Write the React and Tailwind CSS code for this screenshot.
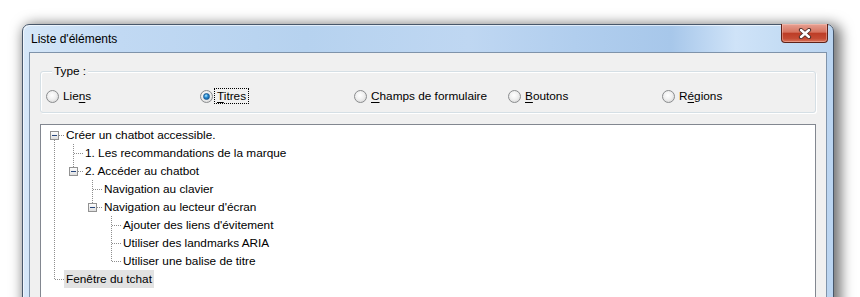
import React from 'react';

const rows = [
  { text: 'Créer un chatbot accessible.', cells: ['first'], box: true },
  { text: '1. Les recommandations de la marque', cells: ['pipe', 'tee'] },
  { text: '2. Accéder au chatbot', cells: ['pipe', 'ell'], box: true },
  { text: 'Navigation au clavier', cells: ['pipe', 'blank', 'tee'] },
  { text: "Navigation au lecteur d'écran", cells: ['pipe', 'blank', 'ell'], box: true },
  { text: "Ajouter des liens d'évitement", cells: ['pipe', 'blank', 'blank', 'tee'] },
  { text: 'Utiliser des landmarks ARIA', cells: ['pipe', 'blank', 'blank', 'tee'] },
  { text: 'Utiliser une balise de titre', cells: ['pipe', 'blank', 'blank', 'ell'] },
  { text: 'Fenêtre du tchat', cells: ['ell'], selected: true },
];

const radios = [
  { pre: 'Lie', key: 'n', post: 's' },
  { pre: '', key: 'T', post: 'itres', checked: true },
  { pre: '', key: 'C', post: 'hamps de formulaire' },
  { pre: '', key: 'B', post: 'outons' },
  { pre: 'R', key: 'é', post: 'gions' },
];

const LINE = '#8e8e8e';

function TreeCell({ type, box }) {
  const v =
    type === 'pipe' || type === 'tee'
      ? [0, 18]
      : type === 'ell'
      ? [0, 9.5]
      : type === 'first'
      ? [9.5, 18]
      : null;
  const h = type === 'tee' || type === 'ell' || type === 'first';
  return (
    <svg width="19" height="18" viewBox="0 0 19 18" className="shrink-0" shapeRendering="crispEdges">
      <defs>
        <linearGradient id="bx" x1="0" y1="0" x2="0" y2="1">
          <stop offset="0" stopColor="#ffffff" />
          <stop offset="1" stopColor="#dcdcdc" />
        </linearGradient>
      </defs>
      {v && (
        <line x1="8.5" y1={v[0]} x2="8.5" y2={v[1]} stroke={LINE} strokeDasharray="1 1" />
      )}
      {h && <line x1="9" y1="9.5" x2="19" y2="9.5" stroke={LINE} strokeDasharray="1 1" />}
      {box && (
        <g>
          <rect x="4.5" y="5.5" width="8" height="8" fill="url(#bx)" stroke="#929292" />
          <line x1="6" y1="9.5" x2="11" y2="9.5" stroke="#27467c" />
        </g>
      )}
    </svg>
  );
}

function Radio({ item }) {
  return (
    <div className="flex items-center h-[18px]">
      <span className="w-[13px] h-[13px] shrink-0 rounded-full border border-[#8a8c8e] bg-[radial-gradient(circle_at_45%_40%,#ffffff_0%,#f0f0f0_45%,#cfcfcf_100%)] flex items-center justify-center">
        {item.checked && (
          <span className="w-[7px] h-[7px] rounded-full bg-[radial-gradient(circle_at_40%_35%,#b8ecff_0%,#2a8fd6_40%,#0c4a8a_100%)] border border-[#1c5a92]" />
        )}
      </span>
      <span
        className={`ml-[1px] px-[2px] leading-[14px] border border-dotted ${
          item.checked ? 'border-black' : 'border-transparent'
        }`}
      >
        {item.pre}
        <u className="underline-offset-[2px]">{item.key}</u>
        {item.post}
      </span>
    </div>
  );
}

export default function App() {
  return (
    <div className="w-[860px] h-[297px] bg-white overflow-hidden pl-[22px] pt-[24px] font-['Liberation_Sans',Arial,sans-serif] text-[11.8px] text-black">
      <div className="w-[812px] h-[320px] flex flex-col rounded-t-[7px] border border-[#48576a] shadow-[4px_3px_13px_3px_rgba(0,0,0,0.55),inset_1px_1px_0_rgba(255,255,255,0.6)] bg-[linear-gradient(90deg,#d6e7f8_0%,#c1d9f3_12%,#b6d2ef_35%,#bfd7f2_55%,#b1ceee_68%,#a7c7ea_80%,#cfe3f8_88%,#c4dcf4_94%,#bad4f0_100%)]">
        <div className="h-[27px] flex items-center justify-between pl-[8px] pr-[5px] shrink-0">
          <span className="leading-[14px] text-[12px]">Liste d'éléments</span>
          <div className="self-start -mt-[1px] w-[47px] h-[19px] rounded-b-[4px] border border-[#5e2219] border-t-0 bg-[linear-gradient(180deg,#e6a193_0%,#d6735f_45%,#bd3d27_52%,#c44a33_80%,#d9745c_100%)] shadow-[inset_0_0_0_1px_rgba(255,210,200,0.4)] flex items-center justify-center">
            <svg width="14" height="11" viewBox="0 0 14 11">
              <path d="M3 2 L11 9 M11 2 L3 9" stroke="#4a2a26" strokeWidth="4.2" strokeLinecap="round" />
              <path d="M3 2 L11 9 M11 2 L3 9" stroke="#ffffff" strokeWidth="2.4" strokeLinecap="round" />
            </svg>
          </div>
        </div>
        <div className="mx-[6px] flex-1 border border-[#7f93aa] bg-[#f0f0f0] px-[10px] flex flex-col">
          <div className="mt-[18px] h-[42px] rounded-[3px] border border-[#d5dfe5] shadow-[inset_1px_1px_0_#ffffff,1px_1px_0_#ffffff] pl-[5px]">
            <div className="-mt-[8px] ml-[6px] w-fit px-[2px] bg-[#f0f0f0] leading-[14px] h-[14px]">
              Type :
            </div>
            <div className="mt-[9px] grid grid-cols-[154px_154px_154px_154px_154px]">
              {radios.map((r, i) => (
                <Radio key={i} item={r} />
              ))}
            </div>
          </div>
          <div className="mt-[11px] flex-1 border border-[#828790] bg-white pt-[1px] pl-[5px]">
            {rows.map((row, i) => (
              <div key={i} className="flex items-center h-[18px]">
                {row.cells.map((c, j) => (
                  <TreeCell key={j} type={c} box={row.box && j === row.cells.length - 1} />
                ))}
                <span
                  className={`-ml-[1px] px-[2px] h-[18px] leading-[18px] whitespace-nowrap ${
                    row.selected ? 'bg-[#e2e2e2]' : ''
                  }`}
                >
                  {row.text}
                </span>
              </div>
            ))}
          </div>
        </div>
      </div>
    </div>
  );
}
